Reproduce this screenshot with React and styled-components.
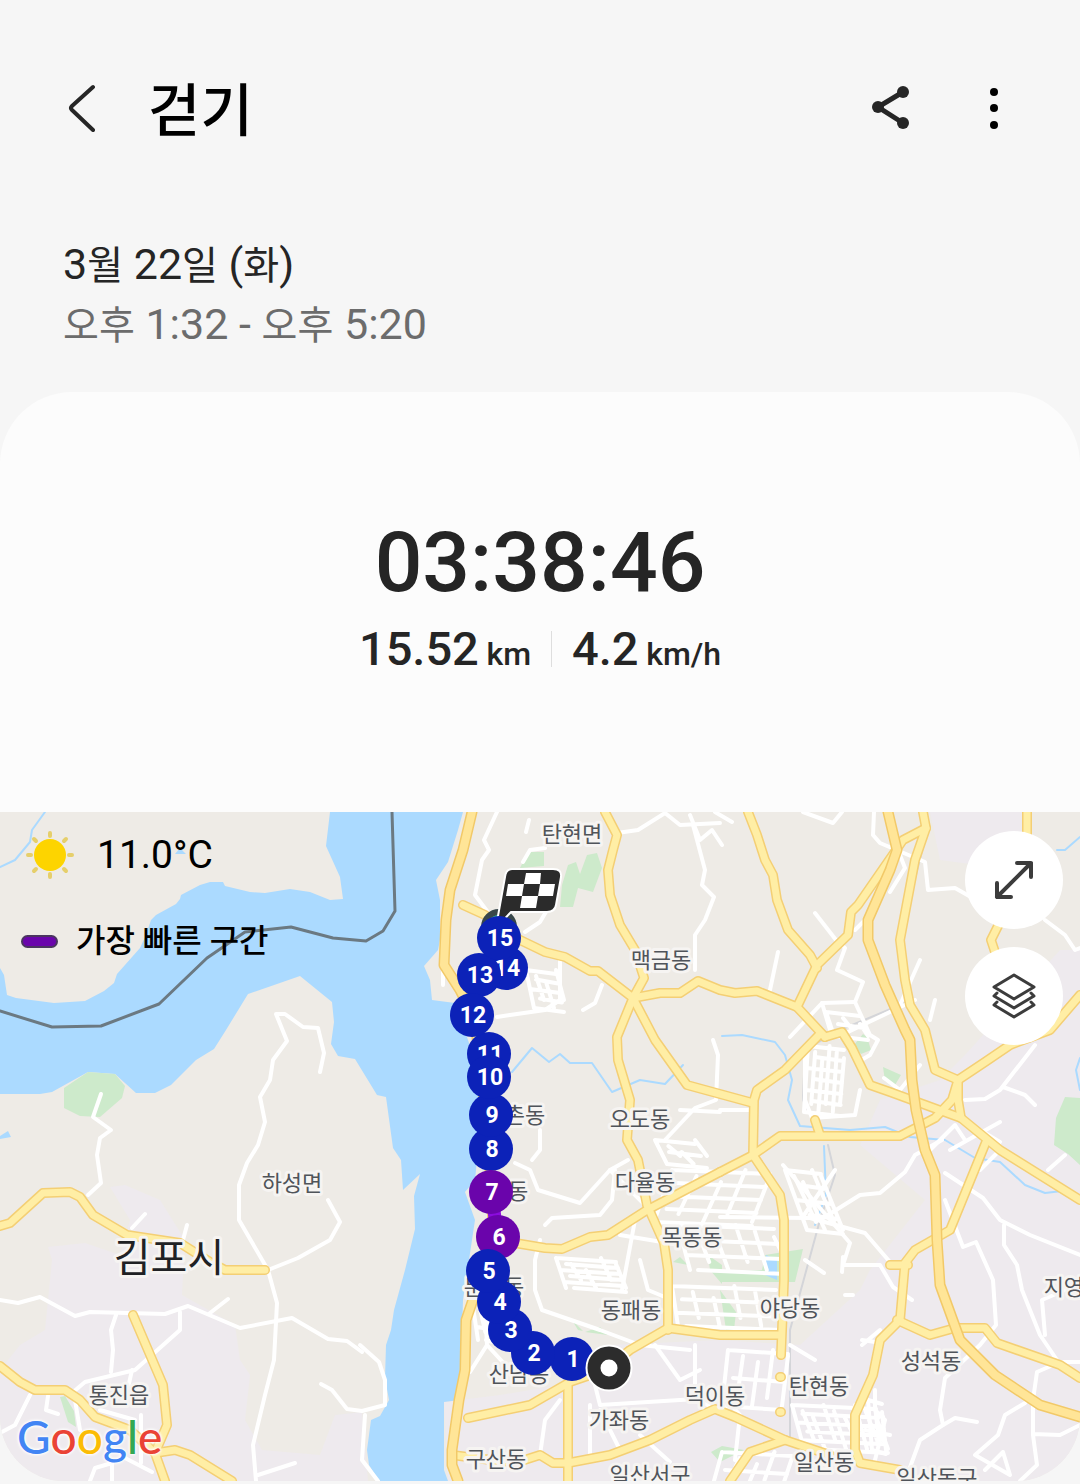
import { useState } from "react";
import styled, { createGlobalStyle } from "styled-components";

const waterPath =
  "M330 812L326 846L340 877L343 899L330 900L310 892L290 889L265 893L250 892L225 886L223 882L210 882L200 885L181 895L180 899L176 904L156 915L151 920L146 935L140 948L117 974L114 983L104 991L85 1001L54 1003L16 998L7 995L4 975L0 968V1094H40L52 1092L88 1072L115 1074L136 1093H155L171 1085L196 1060L214 1049L226 1030L248 994L300 976L332 1002L334 1022L331 1044L338 1056L355 1059L377 1095L386 1097L393 1148L401 1160L403 1190L420 1174L414 1196L415 1229L405 1270L394 1310L391 1330L386 1345L385 1378L389 1400L380 1416L371 1420L367 1450L369 1465L379 1481H448L444 1470V1402L460 1400L463 1300L475 1220L465 1192L475 1180L478 1150L482 1100L475 1060L455 1003L432 1000L430 980L424 966L438 950L440 940V900L436 880L448 862L458 830L463 812Z";

const urbanAreas = [
  "M110 1187L125 1185L160 1200L185 1240L182 1295L235 1325L240 1360L250 1375L245 1420L262 1450L320 1455L335 1415L362 1412L368 1481H0V1370L20 1345L45 1330L52 1260L48 1247L85 1243L120 1255L130 1220Z",
  "M444 1402L500 1395L560 1385L610 1345L720 1340L800 1345L860 1290L870 1270L925 1200L860 1145L880 1100L940 1080L965 1055L1060 950H1080V1481H448Z",
  "M930 812H1030V850L985 866L940 860Z",
];

const parks = [
  "M88 1072L115 1074L125 1086L122 1098L100 1117L80 1116L64 1108V1088Z",
  "M520 868L528 852H544V866Z",
  "M568 865L576 862L580 874L587 855L597 853L602 868L593 892L578 888L573 907H560L562 885Z",
  "M854 1045L863 1034L867 1037L871 1050L861 1054Z",
  "M883 1067L901 1075L895 1085L885 1081Z",
  "M1080 1098L1065 1097L1056 1118L1054 1145L1068 1154L1080 1165Z",
  "M720 1272L762 1270L765 1255L803 1249L795 1282H720Z",
  "M720 1290L736 1312L734 1330H726Z",
  "M673 1262L680 1257L688 1265Z",
  "M708 1255L722 1265V1284L710 1270Z",
  "M572 1320L583 1331L578 1330Z",
  "M585 1332L600 1327L608 1335Z",
  "M60 1397L65 1396L74 1411L76 1427L68 1422Z",
  "M711 1452L722 1446L744 1450L720 1462Z",
];

const streams = [
  "M45 812L32 830L30 842L15 860L0 867",
  "M512 1072L532 1048L549 1062L560 1054L570 1063H592L612 1092L640 1080L665 1084L683 1065",
  "M722 1036L742 1035L775 1042L785 1055L792 1080L788 1100L800 1126L850 1130L885 1127L910 1137L945 1140L975 1158L1000 1162L1025 1185L1045 1193L1062 1191",
  "M1057 850H1065L1080 837",
  "M824 1146L826 1195L815 1225",
  "M1080 1058L1076 1070L1080 1090",
];

const streets = [
  "M101 1094L93 1117L111 1130L100 1138L97 1155L101 1183L88 1195",
  "M320 1072L324 1053L318 1028L303 1027L285 1014H276L287 1041L273 1060L270 1080L260 1097L265 1122L258 1145L247 1163L239 1185V1220L268 1270L277 1303L274 1360L265 1395L253 1445L256 1481",
  "M328 1200L340 1222L330 1240L298 1258L268 1270",
  "M0 1300L18 1303L40 1297L75 1316L90 1312L165 1314L188 1306L240 1328L292 1318L328 1339L347 1341L362 1352",
  "M180 1312V1330L135 1370L85 1382L72 1393",
  "M116 1315L111 1330L113 1350L111 1372M132 1370L128 1388M210 1313L228 1299M132 1228L145 1214M183 1240L187 1225",
  "M321 1384L332 1390L347 1409L362 1411L385 1405V1380L379 1362L360 1345",
  "M365 1415L362 1460L378 1481M258 1475L295 1463M30 1395L15 1425L0 1433M48 1396L46 1410L58 1414",
  "M90 1481L95 1468L112 1463V1481M125 1458L152 1472M141 1415V1463M75 1400L80 1430M100 1410L135 1420",
  "M497 812L484 840L489 850L482 860L475 895L490 915M523 862L530 850L545 848M529 820L526 832",
  "M617 833L638 830L665 813L680 825L720 823M693 825L705 870L702 885L714 897L705 920L695 935V970",
  "M690 815L700 840L712 830L722 845M715 812L732 822",
  "M497 1017L510 1015L545 1010L560 1000V960M443 955V985M583 1010L595 1003L602 985M525 932L540 922L550 905",
  "M713 1040L718 1055L716 1100L695 1108L665 1140M680 1110L720 1112M540 1130V1150L532 1160",
  "M515 1163L530 1170L538 1190L580 1203L610 1170L628 1160M545 1225L552 1218L600 1215L612 1200L615 1170",
  "M540 1240L535 1260V1290L542 1310L600 1330L640 1345L690 1350M485 1310L487 1345L470 1372M487 1345L510 1370",
  "M595 1385L600 1405L680 1400L715 1398M545 1420L540 1455M545 1420L560 1400M590 1405V1455M600 1410L620 1450M640 1435L670 1462",
  "M695 1345V1400L720 1410M655 1345L680 1380L700 1370",
  "M620 1235L680 1245L700 1240M640 1260L648 1290L672 1300M610 1170L655 1215M635 1220L622 1290",
  "M942 1140L915 1155L905 1172L880 1193L860 1195L820 1220M720 1217L810 1218L865 1233L890 1262",
  "M783 1165L850 1243L843 1265L880 1265L893 1287L912 1300M843 1257L842 1272M805 1260L824 1273",
  "M945 1173L983 1198L1000 1220L1030 1235L1080 1255M945 1200L963 1247L976 1242L993 1280L996 1325L980 1345L945 1378L940 1410L943 1425L920 1440L905 1481",
  "M943 1425L955 1418L977 1422M1004 1225V1245L1017 1265L1022 1290L1040 1335L1057 1360M1045 1335L1042 1300L1065 1290",
  "M1080 1362H1060L1037 1372L1033 1400V1435L1037 1465L1020 1481M1033 1434L1060 1435L1080 1425M1025 1403L1005 1415L998 1435L975 1455L1010 1475L1003 1452L985 1470",
  "M874 812L873 835L880 843L925 862L928 890L955 888L985 905M1045 920L1065 935L1075 950L1080 948M890 892L905 868L898 850",
  "M1035 1045L1000 1090L985 1099L965 1100M1003 1087L1025 1095L1035 1105M930 1150L955 1125L965 1140M950 1150L1000 1122",
  "M803 812L833 823L842 812M815 913L836 940L845 948L837 970L863 982L855 1002L870 1035L878 1040L870 1055L858 1062",
  "M778 952L770 990M855 930L870 915M920 960L900 1005M930 1020L935 1000M848 1032L915 1000M790 1037L822 1003L855 1002",
  "M822 1003L830 1030M805 1050V1100L812 1118L855 1115L860 1090M884 1078L900 1090L920 1065M980 1170L1000 1150M1048 1170L1065 1155",
  "M720 1110H750M862 1340L875 1342M845 1295H853M790 1345L815 1360M802 1218L835 1170M722 1395L740 1415L735 1460",
  "M980 1130L1000 1142M875 1390V1410L885 1420L875 1460M865 1430L890 1435M880 1330L862 1345",
];

// dense city blocks: origin, size, columns, rows, slant of the vertical lines
const blocks = [
  [526, 970, 30, 38, 3, 4, 8],
  [808, 1046, 36, 66, 5, 6, -4],
  [826, 1012, 34, 24, 2, 2, 8],
  [556, 1258, 60, 30, 4, 5, 10],
  [672, 1170, 98, 52, 4, 4, -18],
  [678, 1225, 96, 45, 5, 3, 12],
  [672, 1286, 104, 40, 5, 3, 6],
  [785, 1170, 36, 60, 4, 4, 22],
  [472, 1300, 22, 40, 3, 3, 6],
  [728, 1350, 60, 56, 4, 2, -6],
  [792, 1405, 84, 44, 8, 5, 12],
  [722, 1452, 70, 36, 4, 2, -10],
  [868, 1400, 14, 50, 2, 4, 4],
  [655, 1140, 40, 24, 3, 2, 12],
];

const highways = [
  "M472 812L463 850L450 890L446 920L444 965L460 990L475 1020L484 1100L490 1170L494 1240L478 1285L466 1320L465 1370L459 1400L452 1450V1465L458 1481",
  "M888 812L897 850L890 870L868 920V940L885 985L905 1030L910 1040L912 1080L916 1110L925 1150L935 1175L937 1240L940 1285L960 1340L995 1375L1040 1405L1080 1417",
];

const roads = [
  "M463 905L485 915L520 940L545 952L565 957L590 971H598L633 998",
  "M605 812L617 835L613 850L608 870L610 895L620 925L635 950L644 978L633 998L617 1037L618 1060L630 1100L627 1140L638 1160L647 1205L664 1243L668 1270V1330",
  "M633 998L660 993L680 993L698 981L720 990L735 993L757 991L797 1007L825 1037",
  "M633 998L655 1040L687 1085L720 1094L753 1103",
  "M748 812L757 835L765 860L773 875L777 900L788 930L810 955L817 968",
  "M926 828L903 840L858 905L851 912L848 935L817 965L797 1007",
  "M923 812L926 828L915 860L900 940L905 980L910 1005L925 1030L935 1070L958 1080V1100L961 1118L1000 1150L1080 1200",
  "M825 1037L842 1032L852 1048L870 1085L890 1092L961 1118",
  "M818 1036L785 1070L757 1090L754 1100L753 1155L780 1195L784 1220V1280L781 1355",
  "M720 1172L753 1155L780 1136H900L935 1118L952 1100L958 1080L985 1062L1010 1045L1050 1030L1080 995",
  "M815 1120L820 1135M780 1377H781M780 1412H781M890 1265H908M1027 812V835M1000 922L991 940L996 955",
  "M986 1142L950 1230L915 1250L905 1263L900 1320L880 1340L873 1375L855 1415V1450L860 1463L900 1470",
  "M897 1320L930 1335L955 1328H985L997 1343L1060 1365L1080 1378",
  "M720 1172L647 1210L608 1235L590 1237L562 1249L545 1248L515 1243",
  "M668 1328L630 1350L605 1370L570 1382L530 1405L468 1418M668 1328L720 1335H778",
  "M568 1385V1481M568 1463L610 1455L650 1440L690 1420L715 1409L735 1417L785 1440L830 1455",
  "M785 1440L750 1452L730 1481M452 1455L515 1463L540 1455L553 1463H568",
  "M0 1226L10 1223L43 1193L70 1192L80 1197L93 1215L127 1235L180 1243L210 1262L225 1270H265",
  "M133 1315L163 1385L167 1425L155 1453L165 1481",
  "M0 1366L20 1382L35 1390H65L80 1400L95 1417L130 1430L155 1453L175 1450L190 1455L232 1481",
];

const places = [
  { name: "탄현면", x: 572, y: 834 },
  { name: "맥금동", x: 661, y: 960 },
  { name: "촌동", x: 525, y: 1115 },
  { name: "오도동", x: 640, y: 1119 },
  { name: "다율동", x: 645, y: 1182 },
  { name: "동", x: 518, y: 1191 },
  { name: "목동동", x: 692, y: 1237 },
  { name: "문발동", x: 494, y: 1287 },
  { name: "동패동", x: 631, y: 1310 },
  { name: "야당동", x: 790, y: 1308 },
  { name: "산남동", x: 519, y: 1374 },
  { name: "덕이동", x: 715, y: 1396 },
  { name: "탄현동", x: 819, y: 1386 },
  { name: "가좌동", x: 619, y: 1420 },
  { name: "구산동", x: 496, y: 1459 },
  { name: "일산동", x: 824, y: 1462 },
  { name: "일산서구", x: 650, y: 1475 },
  { name: "일산동구", x: 937, y: 1478 },
  { name: "성석동", x: 931, y: 1361 },
  { name: "지영동", x: 1074, y: 1287 },
  { name: "하성면", x: 292, y: 1183 },
  { name: "통진읍", x: 119, y: 1395 },
  { name: "김포시", x: 169, y: 1257, city: true },
];

// later entries are painted over earlier ones
const kilometers = [
  { km: 1, x: 572, y: 1359 },
  { km: 2, x: 533, y: 1353 },
  { km: 3, x: 510, y: 1330 },
  { km: 4, x: 499, y: 1302 },
  { km: 6, x: 498, y: 1237, fastest: true },
  { km: 5, x: 488, y: 1271 },
  { km: 8, x: 491, y: 1149 },
  { km: 7, x: 491, y: 1192, fastest: true },
  { km: 9, x: 491, y: 1115 },
  { km: 11, x: 489, y: 1054 },
  { km: 10, x: 489, y: 1077 },
  { km: 14, x: 506, y: 968 },
  { km: 13, x: 479, y: 975 },
  { km: 12, x: 472, y: 1015 },
  { km: 15, x: 499, y: 938 },
];

const blockPath = ([x, y, w, h, cols, rows, slant]) => {
  let d = "";
  for (let i = 0; i <= cols; i++) {
    const px = x + (w * i) / cols;
    const cut = (i % 3) * 6;
    d += `M${px} ${y + cut}L${px + slant} ${y + h - (i % 2) * 8}`;
  }
  for (let j = 0; j <= rows; j++) {
    const py = y + (h * j) / rows;
    const shift = (slant * j) / rows;
    d += `M${x + shift + (j % 2) * 8} ${py}L${x + shift + w} ${py + 4}`;
  }
  return d;
};

const RouteMap = () => (
  <MapSvg viewBox="0 812 1080 669" preserveAspectRatio="xMidYMid slice" role="img" aria-label="이동 경로">
    {urbanAreas.map((d) => (
      <path key={d} d={d} fill="#eeeaee" />
    ))}
    <path d={waterPath} fill="#abdaff" />
    {parks.map((d) => (
      <path key={d} d={d} fill="#cdeacb" />
    ))}
    <path d="M175 854L180 848L186 854ZM0 1136L8 1131L11 1137L0 1139ZM766 1255L777 1260V1280L765 1275Z" fill="#abdaff" />
    <Lines $color="#abdaff" $width={2}>
      {streams.map((d) => (
        <path key={d} d={d} />
      ))}
    </Lines>
    <Lines $color="#d4d5d9" $width={2}>
      <path d="M928 828L912 890M905 1003L840 1030L805 1050L803 1100L812 1118M828 1145L835 1175L820 1220L790 1330V1440" />
    </Lines>
    <Lines $color="#ffffff" $width={4}>
      {streets.map((d) => (
        <path key={d} d={d} />
      ))}
      {blocks.map((block) => (
        <path key={block.join()} d={blockPath(block)} />
      ))}
    </Lines>
    <Lines $color="#f4cf74" $width={10}>
      {roads.map((d) => (
        <path key={d} d={d} />
      ))}
    </Lines>
    <Lines $color="#ffeea5" $width={7}>
      {roads.map((d) => (
        <path key={d} d={d} />
      ))}
    </Lines>
    <Lines $color="#f2c968" $width={11}>
      {highways.map((d) => (
        <path key={d} d={d} />
      ))}
    </Lines>
    <Lines $color="#ffe597" $width={8}>
      {highways.map((d) => (
        <path key={d} d={d} />
      ))}
    </Lines>
    <Lines $color="#6b7982" $width={3}>
      <path d="M0 1011L52 1027L101 1026L159 1004L207 958L245 932L291 927L333 938L366 941L383 931L395 911L392 812" />
    </Lines>

    {places.map(({ name, x, y, city }) => (
      <Place key={name} x={x} y={y + (city ? 15 : 8)} $city={city}>
        {name}
      </Place>
    ))}

    <path d="M492 1192L497 1237" stroke="#8c0bdf" strokeWidth="13" />
    <circle cx="499" cy="927" r="15" fill="#33c490" stroke="#38474a" strokeWidth="6" />
    <path
      d="M512 869H553Q562 869 561 877L556 905Q555 912 547 912H511L499 925L498 916L505 877Q506 869 512 869Z"
      fill="#2b2b2b"
      stroke="#ffffff"
      strokeWidth="2"
      strokeLinejoin="round"
    />
    <path
      d="M526 873H541L540 884H555L553 896H538L536 908H520L522 896H506L508 884H524ZM524 884L522 896H538L540 884Z"
      fill="#ffffff"
      fillRule="evenodd"
    />
    {kilometers.map(({ km, x, y, fastest }) => (
      <g key={km}>
        <circle cx={x} cy={y} r="22" fill={fastest ? "#6a04ab" : "#0c22b8"} />
        <PinText x={x + 1} y={y + 8}>
          {km}
        </PinText>
      </g>
    ))}
    <circle cx="609" cy="1368" r="16" fill="#ffffff" stroke="#ffffff" strokeWidth="15" />
    <circle cx="609" cy="1368" r="15" fill="#ffffff" stroke="#2c2c2c" strokeWidth="13" />
  </MapSvg>
);

const App = () => {
  const [expanded, setExpanded] = useState(false);

  return (
    <Page>
      <GlobalStyle />
      <Header>
        <IconButton aria-label="뒤로">
          <svg width="48" height="48" viewBox="0 0 48 48" fill="none" stroke="#262626" strokeWidth="4" strokeLinecap="round" strokeLinejoin="round">
            <path d="M35 3L14 22Q12 24 14 26L35 46" />
          </svg>
        </IconButton>
        <Title>걷기</Title>
        <Actions>
          <IconButton aria-label="공유">
            <svg width="48" height="48" viewBox="0 0 48 48" fill="#262626">
              <path d="M37 8L12 23L37 39" fill="none" stroke="#262626" strokeWidth="5" />
              <circle cx="12" cy="23" r="6" />
              <circle cx="37" cy="8" r="6" />
              <circle cx="37" cy="39" r="6" />
            </svg>
          </IconButton>
          <IconButton aria-label="더보기">
            <svg width="48" height="48" viewBox="0 0 48 48">
              <circle cx="24" cy="8" r="4" />
              <circle cx="24" cy="24" r="4" />
              <circle cx="24" cy="41" r="4" />
            </svg>
          </IconButton>
        </Actions>
      </Header>

      <When>
        <DateLine>
          3<Hangul>월</Hangul> 22<Hangul>일</Hangul> (<Hangul>화</Hangul>)
        </DateLine>
        <DateLine $sub>
          <Hangul>오후</Hangul> 1:32 - <Hangul>오후</Hangul> 5:20
        </DateLine>
      </When>

      <Card>
        <Summary>
          <Duration>03:38:46</Duration>
          <Stats>
            <Stat>
              15.52 <Unit>km</Unit>
            </Stat>
            <Divider />
            <Stat>
              4.2 <Unit>km/h</Unit>
            </Stat>
          </Stats>
        </Summary>

        <MapArea $expanded={expanded}>
          <RouteMap />
          <MapInfo>
            <InfoRow>
              <svg width="58" height="58" viewBox="0 0 58 58">
                <g stroke="#e6cf6b" strokeWidth="4" strokeLinecap="round">
                  <path d="M29 7V10M29 48V51M7 29H10M48 29H51M13 13L15 15M43 43L45 45M13 45L15 43M43 15L45 13" />
                </g>
                <circle cx="29" cy="29" r="16" fill="#fdd400" />
              </svg>
              <Temperature>11.0°C</Temperature>
            </InfoRow>
            <InfoRow>
              <Swatch />
              <Legend>가장 빠른 구간</Legend>
            </InfoRow>
          </MapInfo>
          <MapButtons>
            <RoundButton aria-label="지도 확대" onClick={() => setExpanded(!expanded)}>
              <svg width="48" height="48" viewBox="0 0 48 48" fill="none" stroke="#3c3c3c" strokeWidth="4" strokeLinecap="round" strokeLinejoin="round">
                <path d="M7 41L41 7M27 7H41V21M7 27V41H21" />
              </svg>
            </RoundButton>
            <RoundButton aria-label="지도 유형">
              <svg width="48" height="48" viewBox="0 0 48 48" fill="none" stroke="#3c3c3c" strokeWidth="3" strokeLinecap="round" strokeLinejoin="round">
                <path d="M24 3L44 15L24 27L4 15Z" />
                <path d="M7 21L4 24L24 36L44 24L41 21" />
                <path d="M7 30L4 33L24 45L44 33L41 30" />
              </svg>
            </RoundButton>
          </MapButtons>
          <Google href="#google">
            <Letter $color="#4285f4">G</Letter>
            <Letter $color="#ea4335">o</Letter>
            <Letter $color="#fbbc05">o</Letter>
            <Letter $color="#4285f4">g</Letter>
            <Letter $color="#34a853">l</Letter>
            <Letter $color="#ea4335">e</Letter>
          </Google>
        </MapArea>
      </Card>
    </Page>
  );
};

const GlobalStyle = createGlobalStyle`
  body {
    margin: 0;
    background-color: #f6f6f6;
    font-family: Roboto, "Noto Sans CJK KR", sans-serif;
  }
`;

const Page = styled.div`
  min-height: 100vh;
  box-sizing: border-box;
  padding-top: 60px;
  color: #252525;
`;

const Header = styled.header`
  display: flex;
  align-items: center;
  height: 96px;
  padding: 0 62px 0 58px;
`;

const IconButton = styled.button`
  display: flex;
  padding: 0;
  border: 0;
  background: none;
  cursor: pointer;
`;

const Title = styled.h1`
  margin: 0 0 0 42px;
  padding-top: 8px;
  color: #000;
  font-size: 57px;
  font-weight: 500;
  line-height: 64px;
`;

const Actions = styled.div`
  display: flex;
  gap: 56px;
  margin-left: auto;
`;

const When = styled.div`
  padding: 78px 63px 38px;
`;

const DateLine = styled.p`
  margin: 0;
  height: 60px;
  color: ${({ $sub }) => ($sub ? "#6c6c6c" : "#252525")};
  font-size: 43px;
  line-height: 60px;
`;

const Hangul = styled.span`
  font-size: 39px;
  line-height: 1;
`;

const Card = styled.main`
  overflow: hidden;
  border-radius: 72px 72px 64px 64px;
  background-color: #fcfcfc;
`;

const Summary = styled.section`
  display: flex;
  flex-direction: column;
  align-items: center;
  gap: 8px;
  padding: 121px 0 135px;
  font-weight: 500;
`;

const Duration = styled.div`
  font-size: 84px;
  line-height: 100px;
`;

const Stats = styled.div`
  display: flex;
  align-items: center;
  gap: 20px;
`;

const Stat = styled.div`
  font-size: 47px;
  line-height: 56px;
`;

const Unit = styled.span`
  margin-left: -4px;
  font-size: 32px;
  line-height: 1;
`;

const Divider = styled.div`
  width: 1px;
  height: 36px;
  background-color: #dedede;
`;

const MapArea = styled.section`
  position: relative;
  height: ${({ $expanded }) => ($expanded ? "100vh" : "669px")};
  overflow: hidden;
  background-color: #eeebe6;
`;

const MapSvg = styled.svg`
  display: block;
  width: 100%;
  height: 100%;
`;

const Lines = styled.g`
  fill: none;
  stroke: ${({ $color }) => $color};
  stroke-width: ${({ $width }) => $width}px;
  stroke-linecap: round;
  stroke-linejoin: round;
`;

const Place = styled.text`
  fill: ${({ $city }) => ($city ? "#202124" : "#50545a")};
  stroke: #f6f4f2;
  stroke-width: 6px;
  stroke-linejoin: round;
  paint-order: stroke;
  text-anchor: middle;
  font-family: "Noto Sans CJK KR", sans-serif;
  font-size: ${({ $city }) => ($city ? "40px" : "22px")};
`;

const PinText = styled.text`
  fill: #fff;
  text-anchor: middle;
  font-size: 23px;
  font-weight: 700;
`;

const MapInfo = styled.div`
  position: absolute;
  top: 14px;
  left: 21px;
  display: flex;
  flex-direction: column;
  gap: 28px;
`;

const InfoRow = styled.div`
  display: flex;
  align-items: center;
  gap: 18px;
  height: 58px;
  color: #000;
`;

const Temperature = styled.span`
  font-size: 39px;
  line-height: 46px;
`;

const Swatch = styled.span`
  box-sizing: border-box;
  width: 37px;
  height: 13px;
  border: 2px solid #4b3560;
  border-radius: 7px;
  background-color: #6a04ab;
`;

const Legend = styled.span`
  font-size: 32px;
  font-weight: 500;
  line-height: 40px;
`;

const MapButtons = styled.div`
  position: absolute;
  top: 19px;
  right: 17px;
  display: flex;
  flex-direction: column;
  gap: 18px;
`;

const RoundButton = styled.button`
  display: flex;
  align-items: center;
  justify-content: center;
  width: 98px;
  height: 98px;
  padding: 0;
  border: 0;
  border-radius: 50%;
  background-color: #fff;
  cursor: pointer;
`;

const Google = styled.a`
  position: absolute;
  bottom: 16px;
  left: 17px;
  display: flex;
  font-family: Lato, sans-serif;
  font-size: 46px;
  font-weight: 500;
  line-height: 56px;
  text-decoration: none;
  text-shadow: 0 0 3px #fff, 0 0 3px #fff, 0 0 4px #fff;
`;

const Letter = styled.span`
  color: ${({ $color }) => $color};
`;

export default App;
